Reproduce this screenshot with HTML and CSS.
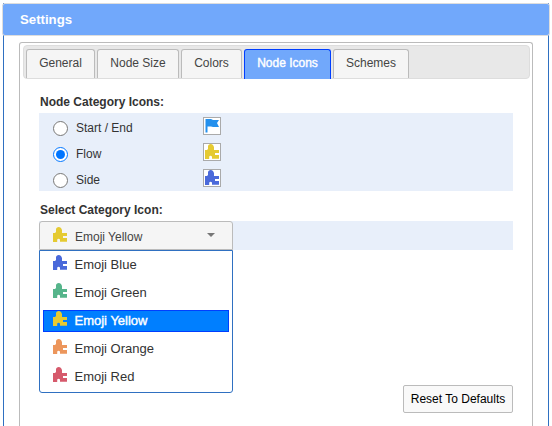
FILE: index.html
```html
<!DOCTYPE html>
<html lang="en">
<head>
<meta charset="utf-8">
<title>Settings</title>
<link rel="stylesheet" href="styles.css">
</head>
<body>
<svg class="defs" width="0" height="0">
  <symbol id="piece" viewBox="0 0 14 15">
    <path d="M3.5 1Q5.7-.8 8 1L9 3V6H14V9H10V11H14V14.8H7V12.5Q5.5 11 4.2 12.5V15H0V6H2L3 5V2Z" fill="currentColor"/>
  </symbol>
</svg>
<div class="dialog">
  <header class="title">Settings</header>
  <main class="panel">
    <nav class="tabs">
      <span class="tab general">General</span>
      <span class="tab size">Node Size</span>
      <span class="tab colors">Colors</span>
      <span class="tab icons active">Node Icons</span>
      <span class="tab schemes">Schemes</span>
    </nav>
    <section class="content">
      <h2>Node Category Icons:</h2>
      <div class="categories">
        <label class="category"><input type="radio" name="c"><span>Start / End</span><i class="frame"><svg viewBox="0 0 14 15"><path d="M.5 1H6L8 2H14L12 5L14 9H8L6 8.5H2.5V14.5H.5Z" fill="#2490ed"/></svg></i></label>
        <label class="category"><input type="radio" name="c" checked><span>Flow</span><i class="frame yellow"><svg><use href="#piece"/></svg></i></label>
        <label class="category"><input type="radio" name="c"><span>Side</span><i class="frame blue"><svg><use href="#piece"/></svg></i></label>
      </div>
      <h2 class="second">Select Category Icon:</h2>
      <div class="selectrow">
        <div class="select"><svg class="piece yellow"><use href="#piece"/></svg><span>Emoji Yellow</span><i class="arrow"></i></div>
      </div>
      <div class="options">
        <div class="option"><svg class="piece blue"><use href="#piece"/></svg><span>Emoji Blue</span></div>
        <div class="option"><svg class="piece green"><use href="#piece"/></svg><span>Emoji Green</span></div>
        <div class="option selected"><svg class="piece yellow"><use href="#piece"/></svg><span>Emoji Yellow</span></div>
        <div class="option"><svg class="piece orange"><use href="#piece"/></svg><span>Emoji Orange</span></div>
        <div class="option"><svg class="piece red"><use href="#piece"/></svg><span>Emoji Red</span></div>
      </div>
      <button class="reset">Reset To Defaults</button>
    </section>
  </main>
</div>
</body>
</html>
```
FILE: styles.css
```css
* { box-sizing: border-box; }
body { margin: 0; padding: 3px 3px 0; background: #fff; font: 12px "Liberation Sans", Arial, sans-serif; color: #333; }
.defs { display: block; height: 0; }
.dialog { width: 546px; height: 423px; border: solid #2f70c1; border-width: 0 1px; }
.title { height: 33px; margin: 0 -2px; background: #71a8fb; border: 1px solid #ddd; border-radius: 3px; padding-left: 17px; font-size: 13.2px; font-weight: bold; line-height: 31px; color: #fff; }
.panel { margin: 6px 15px 0; height: 384px; border: 1px solid #bbb; border-bottom: 0; border-radius: 3px 3px 0 0; padding: 2px; }
.tabs { display: flex; align-items: flex-end; gap: 2px; height: 34px; margin-left: 1px; background: #e8e8e8; border: 1px solid #ddd; border-radius: 4px; padding-left: 2px; }
.tab { height: 29px; border: 1px solid #bbb; border-bottom: 0; border-radius: 3px 3px 0 0; background: #f5f5f5; text-align: center; line-height: 27px; color: #444; }
.general { width: 69px; }
.size { width: 82px; }
.colors { width: 61px; }
.icons { width: 87px; }
.schemes { width: 76px; }
.tab.active { height: 30px; margin-bottom: -1px; background: #71a8fb; border-color: #003eff; color: #fff; -webkit-text-stroke: .4px #fff; }
.content { padding: 15px 17px 0 17px; }
h2 { margin: 0; height: 19px; padding-left: 1px; font-size: 12px; line-height: 16px; font-weight: bold; }
.categories { background: #e8effa; height: 78px; }
.category { display: flex; align-items: center; height: 26px; padding: 4px 0 0 14px; }
.category input { width: 15px; height: 15px; margin: 0; accent-color: #0075ff; }
.category span { width: 119px; margin-left: 8px; }
.frame { width: 18px; height: 18px; margin: -4px 0 0 8px; border: 1px solid #aaa; background: #fff; }
.frame svg { display: block; width: 14px; height: 15px; margin-left: 1px; }
.second { height: 30px; padding-top: 11px; }
.selectrow { background: #e8effa; height: 29px; }
.select { width: 194px; height: 29px; display: flex; align-items: center; background: #f5f5f5; border: 1px solid #bbb; border-radius: 3px 3px 0 0; padding: 0 17px 0 13px; color: #444; }
.piece { width: 14px; height: 15px; margin-top: -2px; }
.select span { margin: 2px 0 0 8px; font-size: 12px; }
.arrow { margin: -2px 0 0 auto; border: 4px solid transparent; border-top-color: #777; border-bottom: 0; }
.options { width: 194px; height: 143px; border: 1px solid #2f70c1; border-radius: 0 0 3px 3px; padding: 0 3px; }
.option { height: 22px; margin: 3px 0 6px; border: 1px solid transparent; display: flex; align-items: center; padding-left: 9px; font-size: 13px; }
.option .piece { margin-top: -5px; }
.option span { margin: -2px 0 0 7.5px; }
.selected { background: #007fff; border-color: #003eff; color: #fff; -webkit-text-stroke: .4px #fff; }
.reset { display: block; width: 110px; height: 28px; margin: -8px 0 0 auto; border: 1px solid #bbb; border-radius: 2px; background: #f9f9f9; padding: 0; font: 12px "Liberation Sans", Arial, sans-serif; color: #000; }
.yellow { color: #e5ca32; }
.blue { color: #4a69da; }
.green { color: #56b58b; }
.orange { color: #ec965c; }
.red { color: #d65a6c; }
```
